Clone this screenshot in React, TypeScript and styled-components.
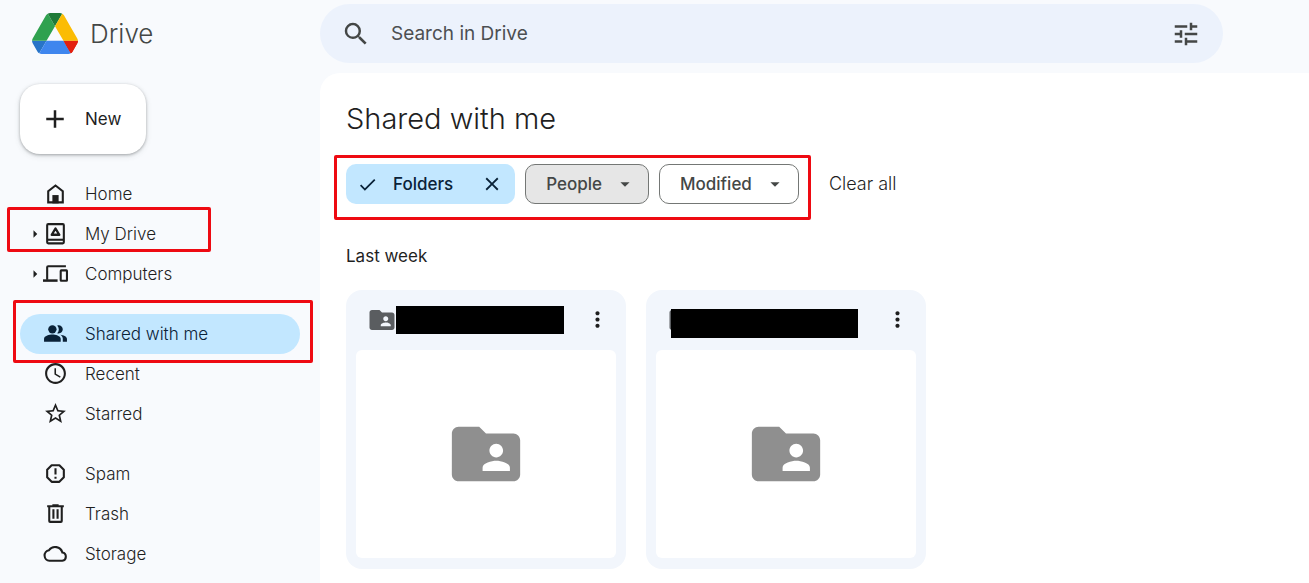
import React from 'react';
import styled, { createGlobalStyle, css } from 'styled-components';
import {
  MdSearch,
  MdTune,
  MdMoreVert,
  MdFolderShared,
  MdPeopleAlt,
  MdAccessTime,
  MdStarOutline,
  MdArrowRight,
  MdArrowDropDown,
  MdAdd,
  MdCheck,
  MdClose,
} from 'react-icons/md';

const GlobalStyle = createGlobalStyle`
  *, *::before, *::after { box-sizing: border-box; }
  body {
    margin: 0;
    background: #f8fafd;
    color: #1f1f1f;
    font-family: Inter, Roboto, "Liberation Sans", sans-serif;
    font-size: 17px;
  }
  button, input { font: inherit; color: inherit; }
  button { border: 0; padding: 0; background: none; cursor: pointer; }
  svg { display: block; flex: none; }
`;

const Page = styled.div`
  display: grid;
  grid-template-columns: 320px minmax(0, 1fr);
  min-height: 100vh;
`;

const Sidebar = styled.aside`
  padding: 9px 20px;
`;

const Brand = styled.a`
  display: flex;
  align-items: center;
  gap: 12px;
  height: 48px;
  padding-left: 12px;
  color: #444746;
  font-size: 26px;
  font-weight: 300;
  text-decoration: none;
`;

const NewButton = styled.button`
  display: flex;
  align-items: center;
  gap: 15px;
  height: 70px;
  margin: 27px 0 20px;
  padding: 0 25px 0 20px;
  border-radius: 20px;
  background: #fff;
  box-shadow: 0 1px 3px rgba(60, 64, 67, 0.4), 0 2px 6px rgba(60, 64, 67, 0.12);
  font-weight: 400;
`;

const NavGroup = styled.ul`
  list-style: none;
  margin: 0 0 20px;
  padding: 0;
`;

const NavItem = styled.li`
  position: relative;
`;

const NavLink = styled.a<{ $active?: boolean }>`
  display: grid;
  grid-template-columns: 24px 25px 1fr;
  align-items: center;
  height: 40px;
  border-radius: 20px;
  background: ${(p) => (p.$active ? '#c2e7ff' : 'transparent')};
  color: ${(p) => (p.$active ? '#0a2238' : '#1f1f1f')};
  font-weight: 300;
  text-decoration: none;
`;

const NavIcon = styled.span`
  margin-left: -1px;
  padding-bottom: 1px;
`;

const NavLabel = styled.span`
  padding-left: 16px;
`;

const Arrow = styled.span`
  display: flex;
  justify-content: flex-end;
  padding-bottom: 1px;
`;

const Marker = styled.span<{ $inset: string }>`
  position: absolute;
  inset: ${(p) => p.$inset};
  border: 3px solid #ee0a12;
  border-radius: 2px;
  pointer-events: none;
`;

const Content = styled.div`
  display: flex;
  flex-direction: column;
`;

const Header = styled.header`
  padding: 4px 86px 10px 0;
`;

const SearchBar = styled.form`
  display: flex;
  align-items: center;
  height: 59px;
  padding: 0 22px 0 21px;
  border-radius: 30px;
  background: #ecf2fc;
  color: #444746;
`;

const SearchInput = styled.input`
  flex: 1;
  min-width: 0;
  margin: 0 20px;
  padding: 0;
  border: 0;
  outline: 0;
  background: transparent;
  font-size: 19px;
  font-weight: 400;
  &::placeholder { color: #4c4f52; opacity: 1; }
`;

const Panel = styled.main`
  flex: 1;
  padding: 26px 26px 14px;
  border-radius: 20px 0 0 0;
  background: #fff;
`;

const Title = styled.h1`
  margin: 0 0 25px;
  font-size: 29px;
  line-height: 40px;
  font-weight: 300;
`;

const FilterBar = styled.div`
  display: flex;
  align-items: center;
  gap: 30px;
`;

const Chips = styled.div`
  position: relative;
  display: flex;
  gap: 10px;
`;

const chip = css`
  display: flex;
  align-items: center;
  height: 40px;
  border-radius: 10px;
  font-weight: 500;
`;

const SelectedChip = styled.div`
  ${chip}
  padding: 0 12px 0 11px;
  background: #c2e7ff;
  color: #0a2238;
`;

const ChipLabel = styled.span`
  margin: 0 28px 0 15px;
`;

const FilterChip = styled.button<{ $pressed?: boolean }>`
  ${chip}
  gap: 12px;
  padding: 0 12px 0 20px;
  border: 1px solid #747775;
  background: ${(p) => (p.$pressed ? '#e6e6e6' : '#fff')};
  color: #444746;
`;

const ClearButton = styled.button`
  padding-bottom: 2px;
  font-size: 18px;
  font-weight: 300;
`;

const SectionTitle = styled.h2`
  margin: 40px 0 22px;
  font-size: 17px;
  line-height: 24px;
  font-weight: 400;
`;

const CardGrid = styled.div`
  display: flex;
  flex-wrap: wrap;
  gap: 20px;
`;

const Card = styled.article`
  width: 280px;
  padding: 0 10px 11px;
  border-radius: 16px;
  background: #f2f6fc;
`;

const CardHeader = styled.div`
  position: relative;
  display: flex;
  align-items: center;
  justify-content: space-between;
  height: 60px;
  padding: 0 6px 1px 11px;
  color: #5a5d60;
`;

const Redaction = styled.span<{ $wide?: boolean }>`
  position: absolute;
  top: ${(p) => (p.$wide ? 19 : 16)}px;
  left: ${(p) => (p.$wide ? 15 : 40)}px;
  width: ${(p) => (p.$wide ? 187 : 168)}px;
  height: ${(p) => (p.$wide ? 29 : 28)}px;
  background: #000;
`;

const MoreButton = styled.button`
  color: #1f1f1f;
`;

const Preview = styled.div`
  display: grid;
  place-items: center;
  height: 208px;
  border-radius: 6px;
  background: #fff;
  color: #8f8f8f;
`;

const DriveLogo = () => (
  <svg width="46" height="41" viewBox="0 0 87.3 78" aria-hidden="true">
    <path fill="#2874c8" d="m6.6 66.85 3.85 6.65c.8 1.4 1.95 2.5 3.3 3.3l13.75-23.8h-27.5c0 1.55.4 3.1 1.2 4.5z" />
    <path fill="#2fa14f" d="m43.65 25-13.75-23.8c-1.35.8-2.5 1.9-3.3 3.3l-25.4 44a9.06 9.06 0 0 0-1.2 4.5h27.5z" />
    <path fill="#e3200f" d="m73.55 76.8c1.35-.8 2.5-1.9 3.3-3.3l1.6-2.75 7.65-13.25c.8-1.4 1.2-2.95 1.2-4.5h-27.5l5.85 11.5z" />
    <path fill="#1f7a38" d="m43.65 25 13.75-23.8c-1.35-.8-2.9-1.2-4.5-1.2h-18.5c-1.6 0-3.15.45-4.5 1.2z" />
    <path fill="#3f86ee" d="m59.8 53h-32.3l-13.75 23.8c1.35.8 2.9 1.2 4.5 1.2h50.8c1.6 0 3.15-.45 4.5-1.2z" />
    <path fill="#e3200f" d="M59.8 53h27.5c0 1.55-.4 3.1-1.2 4.5l-9.25 16c-.8 1.4-1.95 2.5-3.3 3.3z" />
    <path fill="#fbbc04" d="m73.4 26.5-12.7-22c-.8-1.4-1.95-2.5-3.3-3.3l-13.75 23.8 16.15 28h27.45c0-1.55-.4-3.1-1.2-4.5z" />
  </svg>
);

const Glyph = ({ children }: { children: React.ReactNode }) => (
  <svg width="25" height="25" viewBox="0 0 24 24" fill="none" stroke="currentColor" strokeWidth="2" aria-hidden="true">
    {children}
  </svg>
);

const HomeIcon = () => (
  <Glyph>
    <path d="M5 20.5V9.8l7-5.5 7 5.5v10.7z" />
    <path d="M9 13.5h6v8H9z" fill="currentColor" stroke="none" />
  </Glyph>
);

const MyDriveIcon = () => (
  <Glyph>
    <rect x="4" y="3" width="16" height="18.5" rx="1" />
    <path d="M4 18h16" />
    <path d="M12 7.2 8.4 13.2h7.2z" strokeWidth="2.3" strokeLinejoin="round" />
  </Glyph>
);

const ComputersIcon = () => (
  <Glyph>
    <path d="M22 5H5a1 1 0 0 0-1 1v12" />
    <path d="M0 18.8h14" strokeWidth="2.4" />
    <rect x="17" y="9" width="6" height="10" rx="0.5" />
  </Glyph>
);

const SpamIcon = () => (
  <Glyph>
    <path d="M8.3 4h7.4L20 8.3v7.4L15.7 20H8.3L4 15.7V8.3z" strokeLinejoin="round" />
    <path d="M12 7v6M12 15v2" />
  </Glyph>
);

const TrashIcon = () => (
  <Glyph>
    <path d="M4 5h16M9 4h6M6 5v14.2c0 .5.4.8.8.8h10.4c.4 0 .8-.3.8-.8V5M10 8v9M14 8v9" />
  </Glyph>
);

const CloudIcon = () => (
  <Glyph>
    <path d="M18.5 19H6.2A5.1 5.1 0 0 1 5.7 8.9a7.2 7.2 0 0 1 12.9 2.2 4 4 0 0 1-.1 7.9z" />
  </Glyph>
);

interface Entry {
  label: string;
  icon: React.ReactNode;
  expandable?: boolean;
  active?: boolean;
  marker?: string;
}

const groups: Entry[][] = [
  [
    { label: 'Home', icon: <HomeIcon /> },
    { label: 'My Drive', icon: <MyDriveIcon />, expandable: true, marker: '-7px 89px 2px -13px' },
    { label: 'Computers', icon: <ComputersIcon />, expandable: true },
  ],
  [
    { label: 'Shared with me', icon: <MdPeopleAlt size={25} />, active: true, marker: '-14px -13px -9px -7px' },
    { label: 'Recent', icon: <MdAccessTime size={25} /> },
    { label: 'Starred', icon: <MdStarOutline size={25} /> },
  ],
  [
    { label: 'Spam', icon: <SpamIcon /> },
    { label: 'Trash', icon: <TrashIcon /> },
    { label: 'Storage', icon: <CloudIcon /> },
  ],
];

export default function App() {
  return (
    <>
      <GlobalStyle />
      <Page>
        <Sidebar>
          <Brand href="#">
            <DriveLogo />
            Drive
          </Brand>
          <NewButton type="button">
            <MdAdd size={30} />
            New
          </NewButton>
          <nav aria-label="Drive">
            {groups.map((entries) => (
              <NavGroup key={entries[0].label}>
                {entries.map((e) => (
                  <NavItem key={e.label}>
                    <NavLink href="#" $active={e.active} aria-current={e.active ? 'page' : undefined}>
                      <Arrow>{e.expandable && <MdArrowRight size={18} />}</Arrow>
                      <NavIcon>{e.icon}</NavIcon>
                      <NavLabel>{e.label}</NavLabel>
                    </NavLink>
                    {e.marker && <Marker $inset={e.marker} />}
                  </NavItem>
                ))}
              </NavGroup>
            ))}
          </nav>
        </Sidebar>
        <Content>
          <Header>
            <SearchBar role="search">
              <button type="submit" aria-label="Search">
                <MdSearch size={30} />
              </button>
              <SearchInput type="text" placeholder="Search in Drive" aria-label="Search in Drive" />
              <button type="button" aria-label="Search options">
                <MdTune size={30} />
              </button>
            </SearchBar>
          </Header>
          <Panel>
            <Title>Shared with me</Title>
            <FilterBar>
              <Chips>
                <SelectedChip>
                  <MdCheck size={21} />
                  <ChipLabel>Folders</ChipLabel>
                  <button type="button" aria-label="Remove Folders filter">
                    <MdClose size={22} />
                  </button>
                </SelectedChip>
                <FilterChip type="button" $pressed>
                  People
                  <MdArrowDropDown size={22} />
                </FilterChip>
                <FilterChip type="button">
                  Modified
                  <MdArrowDropDown size={22} />
                </FilterChip>
                <Marker $inset="-9px -12px -16px -12px" />
              </Chips>
              <ClearButton type="button">Clear all</ClearButton>
            </FilterBar>
            <SectionTitle>Last week</SectionTitle>
            <CardGrid>
              {[false, true].map((wide) => (
                <Card key={String(wide)}>
                  <CardHeader>
                    <MdFolderShared size={30} />
                    <Redaction $wide={wide} />
                    <MoreButton type="button" aria-label="More actions">
                      <MdMoreVert size={25} />
                    </MoreButton>
                  </CardHeader>
                  <Preview>
                    <MdFolderShared size={82} />
                  </Preview>
                </Card>
              ))}
            </CardGrid>
          </Panel>
        </Content>
      </Page>
    </>
  );
}
